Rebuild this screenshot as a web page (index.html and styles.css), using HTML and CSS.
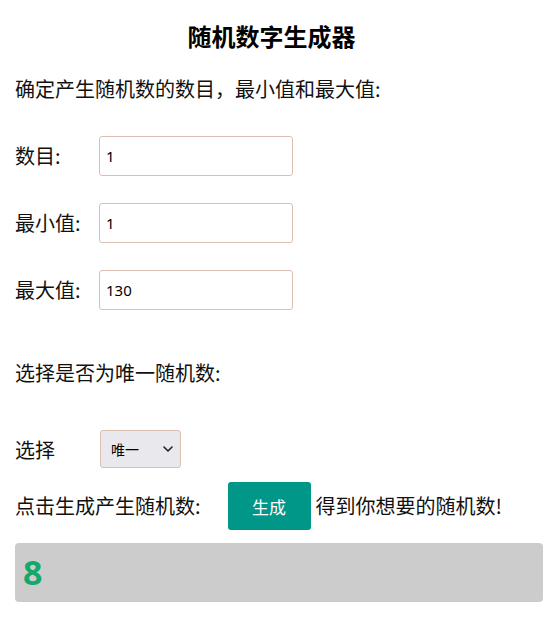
FILE: index.html
```html
<!DOCTYPE html>
<html lang="zh-CN">
<head>
<meta charset="utf-8">
<title>随机数字生成器</title>
<link rel="stylesheet" href="styles.css">
</head>
<body>
<div class="page">
  <h1 class="title">随机数字生成器</h1>
  <p class="intro">确定产生随机数的数目，最小值和最大值:</p>
  <div class="field">
    <label class="label" for="count">数目:</label>
    <input class="num" id="count" type="text" value="1">
  </div>
  <div class="field">
    <label class="label" for="min">最小值:</label>
    <input class="num" id="min" type="text" value="1">
  </div>
  <div class="field">
    <label class="label" for="max">最大值:</label>
    <input class="num" id="max" type="text" value="130">
  </div>
  <p class="question">选择是否为唯一随机数:</p>
  <div class="field select-row">
    <label class="label" for="uniq">选择</label>
    <span class="select-wrap">
      <select class="choice" id="uniq">
        <option>唯一</option>
        <option>不唯一</option>
      </select>
      <svg class="chevron" width="10" height="6" viewBox="0 0 10 6" aria-hidden="true">
        <path d="M1 1 L5 5 L9 1" fill="none" stroke="#222" stroke-width="1.6" stroke-linecap="round" stroke-linejoin="round"/>
      </svg>
    </span>
  </div>
  <div class="action-row">
    <span class="action-text">点击生成产生随机数:</span>
    <button class="gen-btn" type="button">生成</button>
    <span class="after-text">得到你想要的随机数!</span>
  </div>
  <div class="result">8</div>
</div>
</body>
</html>
```

FILE: styles.css
```css
* {
  box-sizing: border-box;
}

html, body {
  margin: 0;
  padding: 0;
  background: #ffffff;
}

body {
  font-family: "Noto Sans CJK SC", "Noto Sans", "Liberation Sans", sans-serif;
  color: #111111;
  font-size: 20px;
}

.page {
  padding: 0 7px 0 15px;
  display: flex;
  flex-direction: column;
}

.title {
  margin: 21px 0 0;
  padding-right: 15px;
  font-size: 24px;
  line-height: 30px;
  font-weight: 700;
  text-align: center;
  color: #000000;
}

.intro {
  margin: 24px 0 0;
  line-height: 28px;
}

.field {
  display: flex;
  align-items: center;
  margin-top: 27px;
  height: 40px;
}

.intro + .field {
  margin-top: 33px;
}

.label {
  width: 84px;
  flex: none;
  line-height: 28px;
}

.num {
  width: 194px;
  height: 40px;
  border: 1px solid #dcbfae;
  border-radius: 3px;
  padding: 0 6px;
  font-family: "Noto Sans", "Noto Sans CJK SC", sans-serif;
  font-size: 15px;
  color: #000000;
  background: #ffffff;
  outline: none;
}

.question {
  margin: 49px 0 0;
  line-height: 28px;
}

.select-row {
  margin-top: 43px;
  height: 38px;
}

.select-row .label {
  padding-top: 2px;
}

.select-wrap {
  position: relative;
  display: inline-flex;
  margin-left: 1px;
}

.choice {
  -webkit-appearance: none;
  appearance: none;
  width: 81px;
  height: 38px;
  border: 1px solid #dcbfae;
  border-radius: 3px;
  background-color: #e9e9ed;
  font-family: "Noto Sans CJK SC", sans-serif;
  font-size: 14px;
  color: #000000;
  padding: 0 0 0 10px;
  outline: none;
}

.chevron {
  position: absolute;
  left: 63px;
  top: 16px;
  pointer-events: none;
}

.action-row {
  display: flex;
  align-items: center;
  margin-top: 14px;
  height: 48px;
}

.action-text {
  line-height: 28px;
}

.gen-btn {
  margin-left: 27px;
  width: 83px;
  height: 48px;
  border: none;
  border-radius: 3px;
  background: #009688;
  color: #ffffff;
  font-family: "Noto Sans CJK SC", sans-serif;
  font-size: 17px;
}

.after-text {
  margin-left: 5px;
  line-height: 28px;
}

.result {
  margin-top: 13px;
  height: 59px;
  background: #cccccc;
  border-radius: 4px;
  padding-left: 8px;
  font-family: "Noto Sans", "Liberation Sans", sans-serif;
  font-size: 34px;
  font-weight: 700;
  line-height: 59px;
  color: #15a86b;
}
```
